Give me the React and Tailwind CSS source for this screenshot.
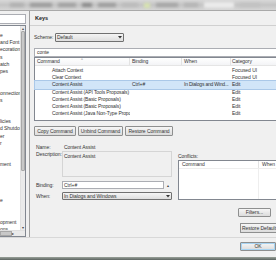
import React from "react";

const F = { fontFamily: '"Liberation Sans", Arial, sans-serif' };

const treeItems = [
  "e", "and Font", "ecoration", "s", "atch", "pes", "", "", "onnection", "s", "", "",
  "licies", "d Shutdo", "er", "r", "", "", "ment", "", "", "", "", "e", "", "", "opment", "ons",
];

const rows = [
  { c: "Attach Context", b: "", w: "", cat: "Focused UI" },
  { c: "Clear Context", b: "", w: "", cat: "Focused UI" },
  { c: "Content Assist", b: "Ctrl+#", w: "In Dialogs and Wind...", cat: "Edit", sel: true },
  { c: "Content Assist (API Tools Proposals)", b: "", w: "", cat: "Edit" },
  { c: "Content Assist (Basic Proposals)", b: "", w: "", cat: "Edit" },
  { c: "Content Assist (Basic Proposals)", b: "", w: "", cat: "Edit" },
  { c: "Content Assist (Java Non-Type Propo", b: "", w: "", cat: "Edit" },
];

function Btn({ children, className = "" }) {
  return (
    <div
      className={`flex items-center justify-center border border-[#8e8f8f] rounded-[1px] bg-gradient-to-b from-[#f6f6f6] to-[#dcdcdc] text-[#333] whitespace-nowrap ${className}`}
    >
      {children}
    </div>
  );
}

function Arrow() {
  return (
    <svg width="4" height="3" viewBox="0 0 4 3">
      <path d="M0 0 L4 0 L2 2.5 Z" fill="#333" />
    </svg>
  );
}

export default function App() {
  return (
    <div
      style={F}
      className="w-[276px] h-[260px] overflow-hidden bg-[#f0f0f0] text-[5px] leading-[7px] text-[#333] tracking-[-0.05px] flex flex-col"
    >
      {/* top blurred toolbar */}
      <div className="h-[11px] shrink-0 relative overflow-hidden bg-gradient-to-b from-[#d8d8d8] via-[#c4c4c4] to-[#d6d6d6] border-b border-[#a9a9a9]">
        <div className="flex h-full items-center gap-[6px] pl-[10px] blur-[1.5px]">
          <div className="w-[14px] h-[4px] bg-[#b0b0b0]" />
          <div className="w-[22px] h-[4px] bg-[#9a9a9a]" />
          <div className="w-[18px] h-[4px] bg-[#a0a0a0]" />
          <div className="w-[10px] h-[4px] bg-[#8a8a8a]" />
          <div className="w-[18px] h-[4px] bg-[#9c9c9c]" />
          <div className="w-[16px] h-[4px] bg-[#bbbbbb]" />
          <div className="w-[6px] h-[5px] bg-[#d8e4b0]" />
          <div className="w-[22px] h-[4px] bg-[#a4a4a4]" />
          <div className="w-[14px] h-[4px] bg-[#b4b4b4]" />
          <div className="w-[30px] h-[6px] bg-[#ececec]" />
          <div className="w-[20px] h-[4px] bg-[#c2c2c2]" />
        </div>
      </div>

      {/* main */}
      <div className="h-[226px] shrink-0 flex">
        {/* left panel */}
        <div className="w-[30px] shrink-0 border-r border-[#a0a0a0] flex flex-col pt-[3px]">
          <div className="w-[26px] h-[10px] bg-white border border-l-0 border-[#abadb3]" />
          <div className="mt-[1px] w-[26px] h-[212px] bg-white border border-l-0 border-[#828790] flex flex-col">
            <div className="flex flex-1 min-h-0">
              <div className="flex-1 overflow-hidden pt-[6px] flex flex-col">
                {treeItems.map((t, i) => (
                  <div key={i} className="h-[7.2px] shrink-0 leading-[7.2px] whitespace-nowrap">
                    {t}
                  </div>
                ))}
              </div>
              <div className="w-[5px] bg-[#eaeaea] border-l border-[#e0e0e0] flex flex-col items-center">
                <div className="h-[5px] text-[4px] leading-[5px] text-[#444]">▴</div>
                <div className="w-[4px] h-[140px] bg-[#c8c8c8] rounded-[1px] border border-[#a8a8a8]" />
                <div className="flex-1" />
                <div className="h-[5px] text-[4px] leading-[5px] text-[#444]">▾</div>
              </div>
            </div>
            <div className="h-[6px] shrink-0 flex bg-[#eaeaea] border-t border-[#e0e0e0]">
              <div className="w-[12px] h-full bg-[#c8c8c8] border border-[#a8a8a8]" />
              <div className="w-[4px] text-[4px] leading-[5px]">▸</div>
              <div className="flex-1" />
              <div className="w-[5px]" />
            </div>
          </div>
        </div>

        {/* right panel */}
        <div className="flex-1 min-w-0 flex flex-col pl-[4px]">
          {/* title */}
          <div className="h-[15px] shrink-0 flex items-center border-b border-[#d0d0d0] -ml-[4px] pl-[5px]">
            <span className="font-bold text-[5.5px] text-[#222]">Keys</span>
          </div>
          {/* scheme */}
          <div className="mt-[7px] h-[9px] shrink-0 flex items-center">
            <span className="w-[21px]">Scheme:</span>
            <div className="w-[69px] h-[9px] border border-[#707070] rounded-[1px] bg-gradient-to-b from-[#f4f4f4] to-[#dedede] flex items-center px-[1px] justify-between">
              <span>Default</span>
              <Arrow />
            </div>
          </div>
          {/* filter */}
          <div className="mt-[6px] h-[9px] shrink-0 bg-white border border-r-0 border-[#abadb3] flex items-center pl-[2px]">
            conte
          </div>
          {/* table */}
          <div className="h-[64px] shrink-0 bg-white border border-r-0 border-[#828790] flex flex-col">
            <div className="h-[8px] shrink-0 flex border-b border-[#e5e5e5] bg-gradient-to-b from-white to-[#f3f4f6]">
              <div className="w-[95px] flex items-center pl-[2px] border-r border-[#e3e3e3] relative">
                Command
                <span className="absolute left-[46px] top-[-2px] text-[4px] text-[#777]">^</span>
              </div>
              <div className="w-[52px] flex items-center pl-[2px] border-r border-[#e3e3e3]">Binding</div>
              <div className="w-[49px] flex items-center pl-[2px] border-r border-[#e3e3e3]">When</div>
              <div className="flex-1 flex items-center pl-[1px]">Category</div>
            </div>
            <div className="flex flex-col pt-[1px]">
              {rows.map((r, i) => (
                <div
                  key={i}
                  className={`h-[7.2px] leading-[7px] flex ${r.sel ? "bg-[#d1e5f8] outline outline-[0.5px] outline-[#aac8e8]" : ""}`}
                >
                  <div className="w-[95px] pl-[17px] whitespace-nowrap overflow-hidden tracking-[-0.12px]">{r.c}</div>
                  <div className="w-[52px] pl-[2px] whitespace-nowrap">{r.b}</div>
                  <div className="w-[49px] pl-[2px] whitespace-nowrap tracking-[-0.2px]">{r.w}</div>
                  <div className="flex-1 pl-[1px] whitespace-nowrap">{r.cat}</div>
                </div>
              ))}
            </div>
          </div>
          {/* buttons */}
          <div className="mt-[5px] h-[10px] shrink-0 flex gap-[2px]">
            <Btn className="w-[42px]">Copy Command</Btn>
            <Btn className="w-[45px]">Unbind Command</Btn>
            <Btn className="w-[48px]">Restore Command</Btn>
          </div>
          {/* name */}
          <div className="mt-[8px] h-[7px] shrink-0 flex items-center pl-[2px]">
            <span className="w-[28px]">Name:</span>
            <span>Content Assist</span>
          </div>
          {/* lower */}
          <div className="flex gap-[6px] h-[56px] shrink-0">
            <div className="w-[138px] flex flex-col">
              <div className="flex">
                <span className="w-[28px] pl-[2px] leading-[6px]">Description:</span>
                <div className="w-[110px] h-[26px] border border-[#d5d5d5] bg-[#f0f0f0] pl-[1px] pt-[1px]">Content Assist</div>
              </div>
              <div className="mt-[4px] h-[8px] flex items-center">
                <span className="w-[28px] pl-[2px]">Binding:</span>
                <div className="w-[102px] h-[8px] bg-white border border-[#abadb3] flex items-center pl-[1px]">Ctrl+#</div>
                <div className="w-[8px] flex items-center justify-center text-[4px]">▴</div>
              </div>
              <div className="mt-[3px] h-[8px] flex items-center">
                <span className="w-[28px] pl-[2px]">When:</span>
                <div className="w-[110px] h-[8px] border border-[#707070] rounded-[1px] bg-gradient-to-b from-[#f4f4f4] to-[#dedede] flex items-center justify-between px-[1px]">
                  <span>In Dialogs and Windows</span>
                  <Arrow />
                </div>
              </div>
            </div>
            <div className="flex-1 flex flex-col pt-[2px]">
              <div className="h-[7px]">Conflicts:</div>
              <div className="h-[40px] bg-white border border-r-0 border-[#828790] flex flex-col">
                <div className="h-[8px] flex border-b border-[#eeeeee]">
                  <div className="w-[80px] flex items-center pl-[3px] border-r border-[#e3e3e3]">Command</div>
                  <div className="flex-1 flex items-center pl-[3px]">When</div>
                </div>
                <div className="flex-1 flex">
                  <div className="w-[80px] border-r border-[#eeeeee]" />
                </div>
              </div>
            </div>
          </div>
          {/* filters / restore defaults */}
          <div className="mt-[1px] flex flex-col items-end">
            <Btn className="w-[33px] h-[9px] mr-[5px]">Filters...</Btn>
            <Btn className="mt-[6px] w-[38px] h-[10px] -mr-[2px] justify-start pl-[1px] border-r-0">Restore Defaults</Btn>
          </div>
        </div>
      </div>

      {/* bottom */}
      <div className="h-[20px] shrink-0 border-t border-[#d8d8d8] flex items-start justify-end pt-[4px]">
        <Btn className="w-[36px] h-[9px] border-[#3c7fb1] shadow-[inset_0_0_0_1px_#a8d4f2]">OK</Btn>
      </div>
      <div className="flex-1 bg-gradient-to-b from-[#9aa29a] to-[#5c6460]" />
    </div>
  );
}
